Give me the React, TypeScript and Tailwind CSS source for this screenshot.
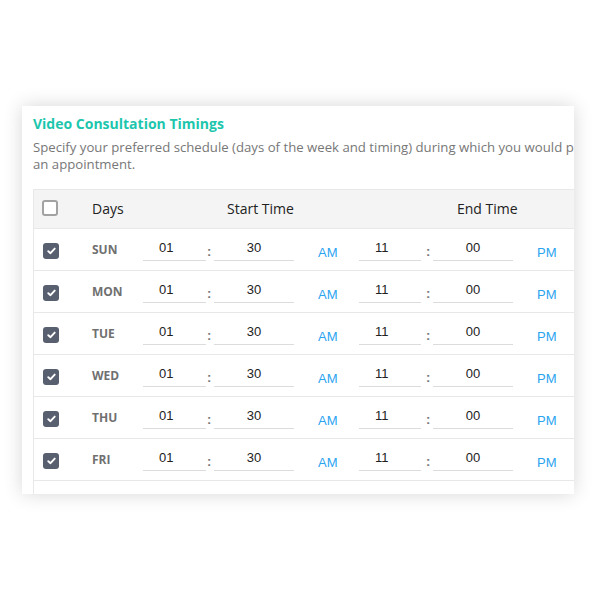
import React from "react";

const days = ["SUN", "MON", "TUE", "WED", "THU", "FRI", "SAT"];

function Check() {
  return (
    <div className="w-[16px] h-[16px] rounded-[3px] bg-[#585f6e] flex items-center justify-center">
      <svg width="9" height="8" viewBox="0 0 9 8">
        <path d="M1.3 4.2 L3.5 6.2 L7.7 1.6" fill="none" stroke="#ffffff" strokeWidth="1.9" strokeLinecap="round" strokeLinejoin="round" />
      </svg>
    </div>
  );
}

function Row({ day }: { day: string }) {
  const num = "h-[21px] border-b border-[#dcdcdc] text-[13px] leading-[15px] text-[#222] pt-0";
  return (
    <div className="flex h-[42px] border-b border-[#e8e8e8] items-start">
      <div className="w-[58px] pl-[9px] pt-[14px]">
        <Check />
      </div>
      <div className="w-[51px] pt-[13px] text-[12px] leading-[16px] font-bold text-[#707070]" style={{ fontFamily: '"Open Sans", sans-serif' }}>
        {day}
      </div>
      <div className={`w-[63px] mt-[11px] pl-[16px] ${num}`}>01</div>
      <div className="w-[8px] pl-[1px] mt-[15px] text-[13px] leading-[15px] font-bold text-[#777]">:</div>
      <div className={`w-[80px] mt-[11px] text-center ${num}`}>30</div>
      <div className="w-[65px] pl-[24px] mt-[16px] text-[13px] leading-[15px] text-[#2ba4f0]">AM</div>
      <div className={`w-[62px] mt-[11px] pl-[16px] ${num}`}>11</div>
      <div className="w-[12px] pl-[5px] mt-[15px] text-[13px] leading-[15px] font-bold text-[#777]">:</div>
      <div className={`w-[80px] mt-[11px] text-center ${num}`}>00</div>
      <div className="w-[60px] pl-[24px] mt-[16px] text-[13px] leading-[15px] text-[#2ba4f0]">PM</div>
    </div>
  );
}

export default function App() {
  return (
    <div className="w-[600px] h-[600px] bg-white pt-[106px] pl-[22px]" style={{ fontFamily: '"Liberation Sans", Arial, sans-serif' }}>
      <div className="w-[552px] h-[388px] bg-white overflow-hidden shadow-[0_0_18px_rgba(0,0,0,0.16)]">
        <div className="w-[700px] pl-[11px] pt-[8px]">
          <div className="text-[14px] leading-[20px] font-bold text-[#1cc6ad]" style={{ fontFamily: '"Open Sans", sans-serif' }}>
            Video Consultation Timings
          </div>
          <div className="mt-[5px] text-[13.2px] leading-[17px] text-[#777]" style={{ fontFamily: '"Open Sans", sans-serif' }}>
            <div className="whitespace-nowrap">Specify your preferred schedule (days of the week and timing) during which you would prefer to take</div>
            <div className="whitespace-nowrap">an appointment.</div>
          </div>
          <div className="mt-[16px] border-l border-[#e8e8e8]">
            <div className="flex h-[40px] bg-[#f4f4f4] border-t border-b border-[#e8e8e8] text-[14px] leading-[20px] text-[#222]" style={{ fontFamily: '"Open Sans", sans-serif' }}>
              <div className="w-[58px] pl-[8px] pt-[10px]">
                <div className="w-[16px] h-[16px] rounded-[3px] border-2 border-[#a2a2a2] bg-white" />
              </div>
              <div className="w-[135px] pt-[9px]">Days</div>
              <div className="w-[230px] pt-[9px]">Start Time</div>
              <div className="pt-[9px]">End Time</div>
            </div>
            {days.map((d) => (
              <Row key={d} day={d} />
            ))}
          </div>
        </div>
      </div>
    </div>
  );
}
